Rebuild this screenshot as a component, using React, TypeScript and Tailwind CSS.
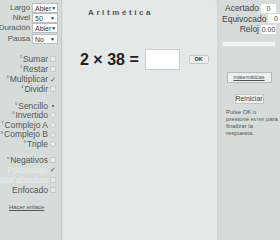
import React from 'react';

const sel = (v: string) => (
  <div className="w-[26px] h-[10px] bg-white border border-[#b9bfbe] flex items-center justify-between px-[2px] text-[7px] leading-none text-[#333]">
    <span>{v}</span>
    <span className="text-[5px]">▼</span>
  </div>
);

function Box({ checked, radio }: { checked?: boolean; radio?: boolean }) {
  return (
    <span
      className={`inline-flex shrink-0 items-center justify-center w-[6px] h-[6px] ml-[2px] text-[7px] leading-none ${
        checked ? 'text-[#555]' : 'border border-[#c4cac9] bg-[#e6eae9]'
      } ${radio ? 'rounded-full' : ''}`}
    >
      {checked ? (radio ? '•' : '✓') : ''}
    </span>
  );
}

function Opt({ n, label, checked, radio, faded, h = 'h-[10px]' }: { n: string; label: string; checked?: boolean; radio?: boolean; faded?: boolean; h?: string }) {
  return (
    <div className={`flex items-center justify-end whitespace-nowrap ${h} pr-[5px] ${faded ? 'text-[#e9edec]' : 'text-[#555]'}`}>
      <sup className="text-[4px] mr-[1px]">{n}</sup>
      <span>{label}</span>
      <Box checked={checked} radio={radio} />
    </div>
  );
}

export default function App() {
  return (
    <div className="w-[280px] h-[240px] flex bg-[#d5dcda] overflow-hidden" style={{ fontFamily: '"Liberation Sans", Arial, sans-serif' }}>
      {/* left controls */}
      <div className="w-[62px] shrink-0 pt-[3px] text-[8.5px] leading-none border-r border-[#c5cccb] overflow-hidden">
        {[['Largo', 'Abier'], ['Nivel', '50'], ['Duración', 'Abier'], ['Pausa', 'No']].map(([l, v], i) => (
          <div key={l} className={`flex items-center h-[10px] ${i === 3 ? 'mt-[1px]' : ''}`}>
            <span className="w-[31px] shrink-0 flex justify-end whitespace-nowrap text-[8px] tracking-[-0.1px] text-[#555] pr-[1px]">{l}</span>
            <div className="ml-[1px]">{sel(v)}</div>
          </div>
        ))}
        <div className="mt-[10px]">
          <Opt n="1" label="Sumar" />
          <Opt n="2" label="Restar" />
          <Opt n="3" label="Multiplicar" checked />
          <Opt n="4" label="Dividir" />
        </div>
        <div className="mt-[7px]">
          <Opt n="5" label="Sencillo" checked radio h="h-[9.6px]" />
          <Opt n="6" label="Invertido" radio h="h-[9.6px]" />
          <Opt n="7" label="Complejo A" radio h="h-[9.6px]" />
          <Opt n="8" label="Complejo B" radio h="h-[9.6px]" />
          <Opt n="9" label="Triple" radio h="h-[9.6px]" />
        </div>
        <div className="mt-[6px]">
          <Opt n="n" label="Negativos" />
          <Opt n="" label="Porcentaje" faded checked />
          <Opt n="" label="Valor absoluto" faded />
          <Opt n="" label="Enfocado" />
        </div>
        <div className="mt-[9px] pl-[9px] text-[6px] text-[#555] underline whitespace-nowrap">Hacer enlace</div>
      </div>

      {/* main panel */}
      <div className="w-[155px] shrink-0 bg-[#e4e8e7] rounded-tr-[4px] border-l border-[#dfe4e3] flex flex-col">
        <div className="mt-[7px] pl-[25px] text-[8px] font-bold tracking-[2.6px] text-[#555]">Aritmética</div>
        <div className="mt-[30px] flex items-center">
          <span className="ml-[17px] text-[16px] font-bold text-[#222] leading-none whitespace-nowrap">2 × 38 =</span>
          <div className="ml-[6px] w-[35px] h-[21px] bg-white border border-[#c9cfce]" />
          <div className="ml-[9px] w-[20px] h-[9px] bg-[#eef0ef] border border-[#c4c9c8] rounded-[2px] flex items-center justify-center text-[5.5px] font-bold text-[#333]">OK</div>
        </div>
      </div>

      {/* right panel */}
      <div className="w-[62px] shrink-0 pl-[3px] pr-[3px] pt-[3px] text-[8.5px] leading-none text-[#444] border-l-2 border-[#d0d7d5]">
        {[['Acertado', '0'], ['Equivocado', '0'], ['Reloj', '0.00']].map(([l, v]) => (
          <div key={l} className="flex items-center h-[10.6px]">
            <span className="flex-1 flex justify-end whitespace-nowrap pr-[2px]">{l}</span>
            <div className="w-[15px] shrink-0 h-[9px] bg-white flex items-center justify-center text-[7px]">{v}</div>
          </div>
        ))}
        <div className="mt-[6px] h-[6px] bg-[#f4f6f5] border border-[#dde2e1]" />
        <div className="mt-[25px] flex justify-center">
          <div className="w-[45px] h-[11px] bg-[#edf0ef] border border-[#b5bbba] flex items-center justify-center text-[5.5px] text-[#555] underline">matemáticas</div>
        </div>
        <div className="mt-[11px] flex justify-center">
          <div className="w-[29px] h-[10px] bg-[#f0f2f1] border border-[#c0c6c5] flex items-center justify-center text-[7px] text-[#444]">Reiniciar</div>
        </div>
        <div className="mt-[5px] ml-[4px] text-[6px] leading-[7px] text-[#555] whitespace-nowrap">
          <div>Pulse OK o</div>
          <div>presione <span className="text-[4px]">ENTER</span> para</div>
          <div>finalizar la</div>
          <div>respuesta.</div>
        </div>
      </div>
    </div>
  );
}
